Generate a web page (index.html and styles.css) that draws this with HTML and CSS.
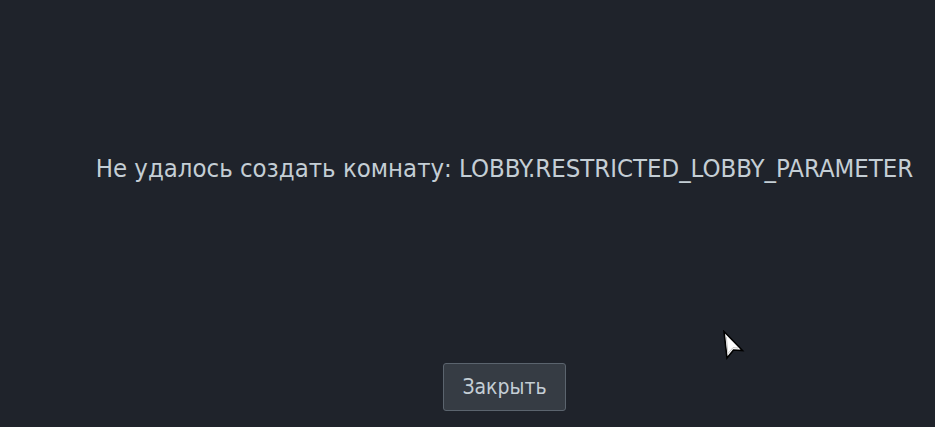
FILE: index.html
```html
<!DOCTYPE html>
<html lang="ru">
<head>
<meta charset="utf-8">
<link rel="stylesheet" href="styles.css">
</head>
<body>
<main class="screen">
  <div class="dialog">
    <p class="message">Не удалось создать комнату: LOBBY.RESTRICTED_LOBBY_PARAMETER</p>
    <button class="close-btn" type="button">Закрыть</button>
  </div>
  <svg class="cursor" width="24" height="32" viewBox="0 0 24 32">
    <path d="M2 1.5 L20.5 20.5 L11.5 20 L5 28 Z" fill="#ffffff" stroke="#000000" stroke-width="1.6" stroke-linejoin="miter"/>
    <path d="M4.4 7 L5.9 23.5 L11 17.6 L16 18" stroke="#c8c8c8" stroke-width="1" fill="none"/>
  </svg>
</main>
</body>
</html>
```

FILE: styles.css
```css
html, body {
  margin: 0;
  padding: 0;
  background: #1f232b;
  height: 100%;
  overflow: hidden;
}

.screen {
  position: relative;
  width: 935px;
  height: 427px;
  box-sizing: border-box;
  padding-left: 74px;
  font-family: "DejaVu Sans Condensed", "DejaVu Sans", sans-serif;
}

.dialog {
  display: flex;
  flex-direction: column;
  align-items: center;
  padding-top: 151px;
}

.message {
  margin: 0;
  color: #c4ced5;
  font-size: 25.5px;
  line-height: 34px;
  white-space: nowrap;
}

.close-btn {
  margin-top: 178px;
  width: 123px;
  height: 48px;
  background: #363c44;
  border: 1px solid #5b646e;
  border-radius: 3px;
  color: #c4ced5;
  font-family: inherit;
  font-size: 21px;
  padding: 0;
}

.cursor {
  position: absolute;
  left: 722px;
  top: 330px;
}
```
